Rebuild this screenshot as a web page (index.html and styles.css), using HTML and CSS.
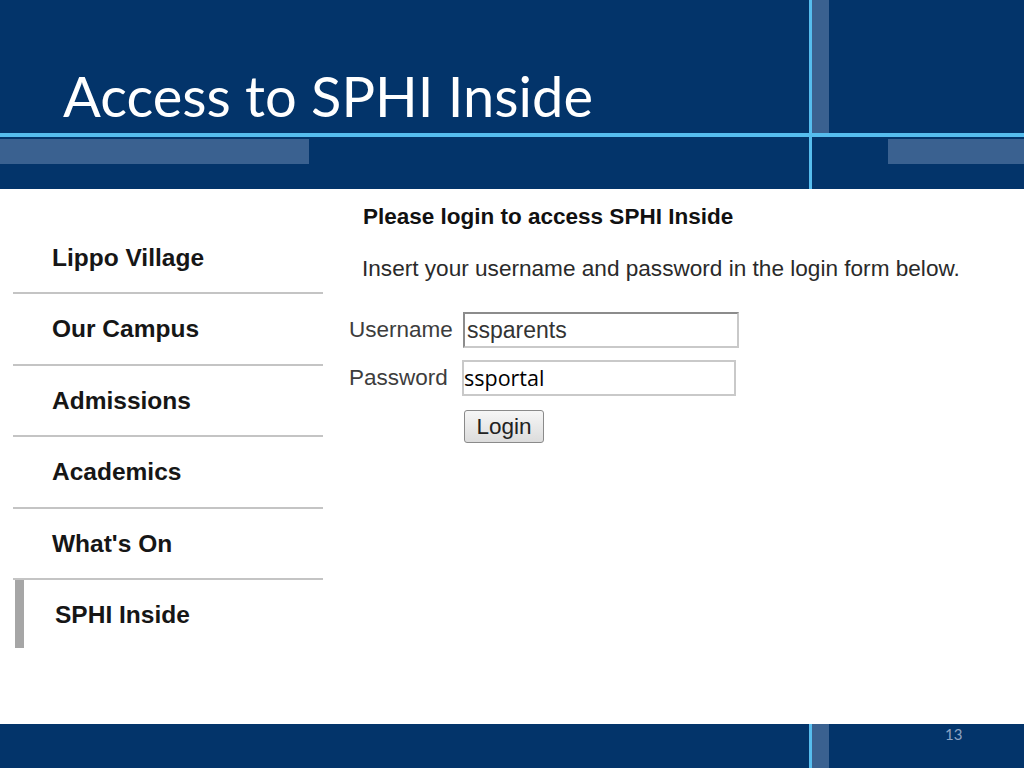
FILE: index.html
```html
<!DOCTYPE html>
<html lang="en">
<head>
  <meta charset="UTF-8">
  <title>Access to SPHI Inside</title>
  <link rel="stylesheet" href="styles.css">
</head>
<body>
  <div class="slide">
    <div class="deco vline"></div>
    <div class="deco vpanel top"></div>
    <div class="deco vpanel bottom"></div>
    <div class="deco hline"></div>
    <div class="deco hpanel-left"></div>
    <div class="deco hpanel-right"></div>

    <div class="header">
      <h1>Access to SPHI Inside</h1>
    </div>

    <div class="shot">
      <ul class="nav">
        <li>Lippo Village</li>
        <li>Our Campus</li>
        <li>Admissions</li>
        <li>Academics</li>
        <li>What's On</li>
        <li class="active">SPHI Inside</li>
      </ul>

      <div class="login">
        <h3>Please login to access SPHI Inside</h3>
        <p>Insert your username and password in the login form below.</p>

        <div class="field">
          <label>Username</label>
          <div class="input user">ssparents</div>
        </div>
        <div class="field">
          <label>Password</label>
          <div class="input pass">ssportal</div>
        </div>
        <div class="field">
          <label></label>
          <button>Login</button>
        </div>
      </div>
    </div>

    <div class="footer">
      <span class="num">13</span>
    </div>
  </div>
</body>
</html>
```

FILE: styles.css
```css
body {
  margin: 0;
  background: #03346a;
}

.slide {
  position: relative;
  width: 1024px;
  height: 768px;
  background: #03346a;
  display: flex;
  flex-direction: column;
  overflow: hidden;
}

/* slide decoration */
.deco {
  position: absolute;
}

.vline {
  left: 809px;
  top: 0;
  width: 3px;
  height: 768px;
  background: #56bdee;
}

.vpanel {
  left: 812px;
  width: 17px;
  background: #3a6190;
}

.vpanel.top {
  top: 0;
  height: 133px;
}

.vpanel.bottom {
  top: 724px;
  height: 44px;
}

.hline {
  left: 0;
  top: 133px;
  width: 1024px;
  height: 4px;
  background: #56bdee;
}

.hpanel-left {
  left: 0;
  top: 139px;
  width: 309px;
  height: 25px;
  background: #3a6190;
}

.hpanel-right {
  left: 888px;
  top: 139px;
  width: 136px;
  height: 25px;
  background: #3a6190;
}

.header {
  height: 189px;
  position: relative;
  z-index: 1;
}

h1 {
  margin: 0;
  padding: 64px 0 0 63px;
  font-family: Lato, "Open Sans", sans-serif;
  font-weight: normal;
  font-size: 56px;
  line-height: 64px;
  color: #fff;
}

/* screenshot area */
.shot {
  position: relative;
  z-index: 1;
  height: 535px;
  background: #fff;
  display: flex;
  font-family: "Liberation Sans", Arial, sans-serif;
}

.nav {
  list-style: none;
  margin: 34px 0 0 13px;
  padding: 0;
  width: 310px;
}

.nav li {
  height: 69.4px;
  line-height: 70px;
  padding-left: 39px;
  border-bottom: 2px solid #c4c4c4;
  font-weight: bold;
  font-size: 24.5px;
  color: #161616;
}

.nav li.active {
  border-bottom: none;
  border-left: 9px solid #a6a6a6;
  margin-left: 2px;
  padding-left: 31px;
  height: 68px;
  line-height: 70px;
}

.login {
  padding: 14px 0 0 26px;
}

.login h3 {
  margin: 0 0 0 14px;
  font-size: 22.5px;
  line-height: 28px;
  color: #111;
}

.login p {
  margin: 24px 0 29px 13px;
  font-size: 22.6px;
  line-height: 28px;
  color: #2a2a2a;
}

.field {
  display: flex;
  align-items: center;
  margin-bottom: 12px;
}

.field label {
  width: 114px;
  font-size: 22.5px;
  color: #3d3d3d;
}

.input {
  width: 270px;
  height: 32px;
  line-height: 32px;
  border: 2px solid #c9c9c9;
  box-sizing: content-box;
}

.input.user {
  border-top-color: #8c8c8c;
  border-left-color: #8c8c8c;
  padding-left: 2px;
  font-size: 23px;
  color: #333;
}

.input.pass {
  margin-left: -1px;
  font-family: "Open Sans", Lato, sans-serif;
  font-size: 21.5px;
  color: #000;
}

.field:last-child {
  margin-top: 14px;
}

button {
  margin: 0 0 0 1px;
  width: 80px;
  height: 33px;
  padding: 0;
  font-family: "Liberation Sans", Arial, sans-serif;
  font-size: 22.5px;
  color: #222;
  background: linear-gradient(#f6f6f6, #dcdcdc);
  border: 1px solid #8a8a8a;
  border-radius: 3px;
}

.footer {
  position: relative;
  z-index: 0;
  height: 44px;
}

.num {
  position: absolute;
  left: 945px;
  top: 1px;
  font-family: Lato, sans-serif;
  font-size: 15px;
  color: #8ea3c3;
}
```
